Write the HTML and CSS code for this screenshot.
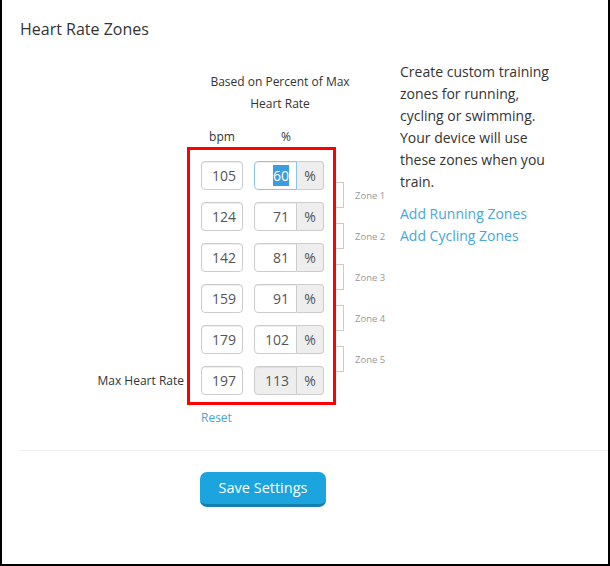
FILE: index.html
```html
<!DOCTYPE html>
<html>
<head>
<meta charset="utf-8">
<link rel="stylesheet" href="styles.css">
</head>
<body>
<div class="frame">
  <h2 class="title">Heart Rate Zones</h2>
  <div class="main">
    <div class="left">
      <div class="heading">Based on Percent of Max<br>Heart Rate</div>
      <div class="col-labels">
        <span class="lbl">bpm</span>
        <span class="lbl lbl-pct">%</span>
      </div>
      <div class="box-row">
        <div class="side-label">Max Heart Rate</div>
        <div class="box">
          <div class="field">105</div>
          <div class="group"><div class="field pct focus"><span class="sel">60</span></div><div class="addon">%</div></div>
          <div class="field">124</div>
          <div class="group"><div class="field pct">71</div><div class="addon">%</div></div>
          <div class="field">142</div>
          <div class="group"><div class="field pct">81</div><div class="addon">%</div></div>
          <div class="field">159</div>
          <div class="group"><div class="field pct">91</div><div class="addon">%</div></div>
          <div class="field">179</div>
          <div class="group"><div class="field pct">102</div><div class="addon">%</div></div>
          <div class="field">197</div>
          <div class="group"><div class="field pct disabled">113</div><div class="addon">%</div></div>
        </div>
        <div class="zones">
          <div class="zone"><div class="bracket"></div><span class="zone-name">Zone 1</span></div>
          <div class="zone"><div class="bracket"></div><span class="zone-name">Zone 2</span></div>
          <div class="zone"><div class="bracket"></div><span class="zone-name">Zone 3</span></div>
          <div class="zone"><div class="bracket"></div><span class="zone-name">Zone 4</span></div>
          <div class="zone"><div class="bracket"></div><span class="zone-name">Zone 5</span></div>
        </div>
      </div>
      <a class="link reset" href="#">Reset</a>
    </div>
    <div class="right">
      <p class="desc">Create custom training zones for running, cycling or swimming. Your device will use these zones when you train.</p>
      <a class="link big" href="#">Add Running Zones</a>
      <a class="link big" href="#">Add Cycling Zones</a>
    </div>
  </div>
  <div class="divider"></div>
  <div class="actions">
    <button class="save">Save Settings</button>
  </div>
</div>
</body>
</html>
```

FILE: styles.css
```css
html, body {
  margin: 0;
  padding: 0;
  background: #fff;
}
body {
  font-family: "Open Sans", "DejaVu Sans", sans-serif;
  color: #333;
}
.frame {
  width: 610px;
  height: 566px;
  box-sizing: border-box;
  border-left: 2px solid #000;
  border-right: 2px solid #000;
  border-bottom: 2px solid #000;
  overflow: hidden;
}
.title {
  margin: 17px 0 0 18px;
  font-size: 16px;
  font-weight: 400;
  line-height: 24px;
  color: #333;
}
.main {
  display: flex;
  margin-top: 20px;
}
.left {
  width: 398px;
  display: flex;
  flex-direction: column;
  padding-top: 10px;
}
.heading {
  margin-left: 198px;
  width: 160px;
  text-align: center;
  font-size: 12px;
  line-height: 22px;
  white-space: nowrap;
}
.col-labels {
  display: grid;
  grid-template-columns: 42px 70px;
  column-gap: 11px;
  margin-left: 199px;
  margin-top: 12px;
  font-size: 12px;
  line-height: 20px;
  text-align: center;
}
.lbl-pct {
  padding-right: 6px;
}
.box-row {
  display: flex;
  align-items: flex-start;
}
.side-label {
  width: 185px;
  box-sizing: border-box;
  align-self: flex-end;
  text-align: right;
  padding-right: 3px;
  font-size: 12px;
  line-height: 29px;
  margin-bottom: 10px;
  white-space: nowrap;
}
.box {
  border: 3px solid #f00;
  padding: 11px 9px 7px 11px;
  display: grid;
  grid-template-columns: 42px 70px;
  grid-auto-rows: 29px;
  column-gap: 11px;
  row-gap: 12px;
}
.field {
  box-sizing: border-box;
  height: 29px;
  border: 1px solid #ccc;
  border-radius: 4px;
  box-shadow: inset 0 1px 1px rgba(0,0,0,.075);
  font-size: 14px;
  line-height: 27px;
  color: #555;
  text-align: right;
  padding-right: 6px;
  background: #fff;
}
.group {
  display: flex;
}
.field.pct {
  width: 43px;
  border-radius: 4px 0 0 4px;
  padding-right: 7px;
}
.field.focus {
  border-color: #8ec4e6;
}
.field.disabled {
  background: #eee;
}
.sel {
  background: #3d9be0;
  color: #fff;
  padding: 1px 0;
}
.addon {
  box-sizing: border-box;
  width: 27px;
  height: 29px;
  border: 1px solid #ccc;
  border-left: none;
  border-radius: 0 4px 4px 0;
  background: #eee;
  font-size: 14px;
  line-height: 27px;
  color: #555;
  text-align: center;
}
.zones {
  margin-top: 35px;
  display: flex;
  flex-direction: column;
  gap: 15px;
}
.zone {
  display: flex;
  align-items: center;
  height: 26px;
}
.bracket {
  box-sizing: border-box;
  width: 8px;
  height: 26px;
  border: 1px solid #ccc;
  border-left: none;
}
.zone-name {
  margin-left: 11px;
  font-size: 9.5px;
  color: #999;
  white-space: nowrap;
}
.link {
  color: #4aa6d4;
  text-decoration: none;
}
.reset {
  margin-left: 199px;
  margin-top: 4px;
  font-size: 12px;
  line-height: 18px;
  align-self: flex-start;
}
.right {
  width: 155px;
  font-size: 14px;
  line-height: 22px;
  display: flex;
  flex-direction: column;
}
.desc {
  margin: 0 0 10px 0;
}
.big {
  font-size: 14px;
  line-height: 22px;
}
.divider {
  margin: 23px 0 0 18px;
  height: 1px;
  background: #eee;
}
.actions {
  padding: 21px 0 0 198px;
}
.save {
  width: 126px;
  height: 35px;
  box-sizing: border-box;
  border: none;
  border-bottom: 3px solid #1680ad;
  border-radius: 7px;
  background: #1ba4dd;
  color: #fff;
  font-family: "Open Sans", "DejaVu Sans", sans-serif;
  font-size: 14.5px;
  padding: 0;
  line-height: 30px;
}
```
